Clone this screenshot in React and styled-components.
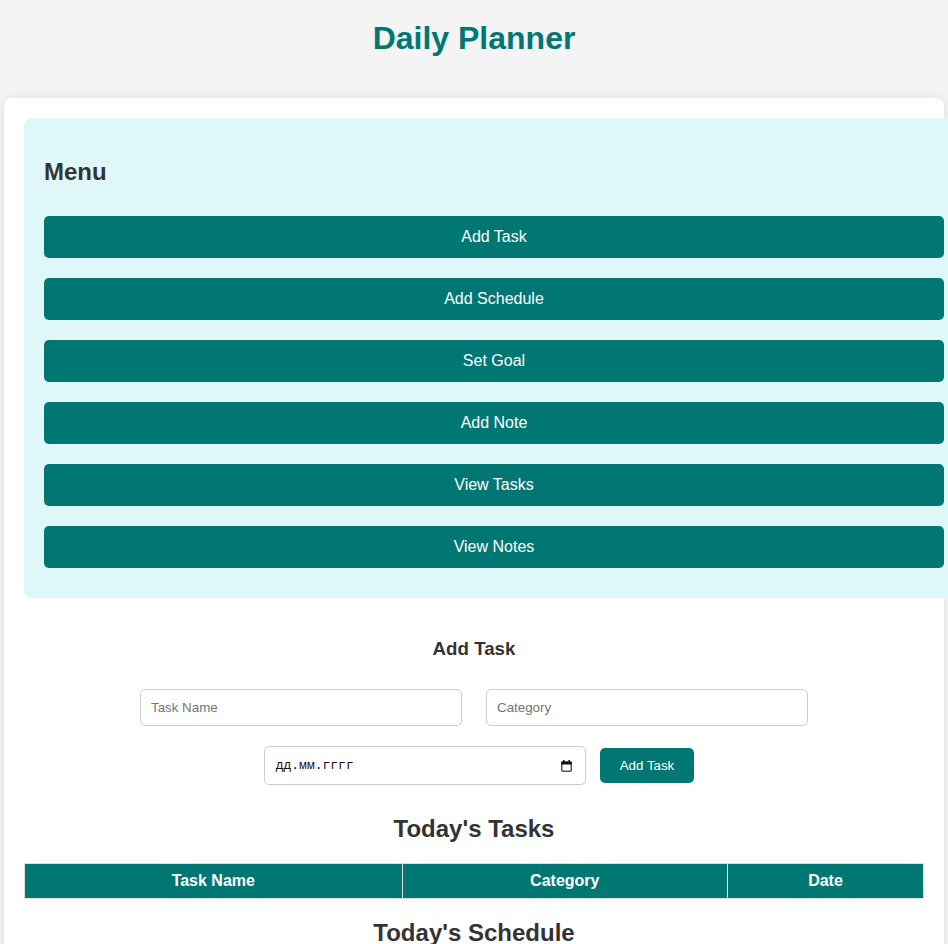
import React from "react";
import styled, { createGlobalStyle } from "styled-components";

const TEAL = "#007773";

const GlobalStyle = createGlobalStyle`
  body {
    margin: 0;
    background-color: #f4f4f4;
    font-family: "Liberation Sans", Arial, sans-serif;
    color: #333;
  }
`;

const Header = styled.header`
  padding-top: 20px;
  text-align: center;
`;

const Title = styled.h1`
  margin: 0;
  font-size: 32px;
  line-height: 37px;
  color: ${TEAL};
`;

const Card = styled.main`
  width: 900px;
  margin: 41px auto 0;
  padding: 20px;
  background-color: #fff;
  border-radius: 8px;
  box-shadow: 0 0 10px rgba(0, 0, 0, 0.1);
  display: flex;
  flex-direction: column;
`;

const Menu = styled.nav`
  box-sizing: content-box;
  width: 100%;
  padding: 20px;
  background-color: #e0f7fa;
  border-radius: 8px;
`;

const MenuTitle = styled.h2`
  margin: 20px 0;
  font-size: 24px;
  line-height: 27.6px;
  color: #333;
`;

const MenuList = styled.div`
  display: flex;
  flex-direction: column;
  gap: 20px;
  padding: 10px 0;
`;

const MenuButton = styled.button`
  width: 100%;
  padding: 12px;
  border: none;
  border-radius: 5px;
  background-color: ${TEAL};
  color: #fff;
  font-family: "Liberation Sans", Arial, sans-serif;
  font-size: 16px;
  line-height: 18px;
  cursor: pointer;
`;

const FormTitle = styled.h3`
  margin: 40px 0 0;
  font-size: 18.72px;
  line-height: 21.5px;
  text-align: center;
  color: #333;
`;

const Form = styled.form`
  display: flex;
  flex-direction: column;
  gap: 20px;
  margin-top: 30px;
`;

const FormRow = styled.div`
  display: flex;
  justify-content: center;
  align-items: center;
  gap: 4px;
`;

const TextInput = styled.input`
  box-sizing: border-box;
  width: 322px;
  height: 37px;
  margin: 0 10px;
  padding: 10px;
  border: 1px solid #ccc;
  border-radius: 5px;
  font-family: "Liberation Sans", Arial, sans-serif;
  font-size: 13.33px;
  outline: none;

  &::placeholder {
    color: #757575;
  }
`;

const DateField = styled.label`
  box-sizing: border-box;
  width: 322px;
  height: 39px;
  margin: 0 10px;
  padding: 0 13px 0 11px;
  border: 1px solid #ccc;
  border-radius: 5px;
  display: flex;
  align-items: center;
  justify-content: space-between;
  background-color: #fff;
`;

const DateText = styled.span`
  font-family: "Liberation Mono", "Courier New", monospace;
  font-size: 13px;
  color: #111;
`;

const SubmitButton = styled.button`
  padding: 10px 20px;
  border: none;
  border-radius: 5px;
  background-color: ${TEAL};
  color: #fff;
  font-family: "Liberation Sans", Arial, sans-serif;
  font-size: 13.33px;
  line-height: 15px;
  cursor: pointer;
`;

const SectionTitle = styled.h2`
  margin: ${(p) => p.$top}px 0 20px;
  font-size: 24px;
  line-height: 27.6px;
  text-align: center;
  color: #333;
`;

const Table = styled.table`
  width: 900px;
  border-collapse: collapse;
`;

const HeadCell = styled.th`
  width: ${(p) => p.$width};
  padding: 8px;
  border: 1px solid #ddd;
  background-color: ${TEAL};
  color: #fff;
  font-size: 16px;
  line-height: 18.4px;
`;

function CalendarIcon() {
  return (
    <svg width="11" height="12" viewBox="0 0 11 12">
      <rect x="0.75" y="2.25" width="9.5" height="9" rx="1" fill="none" stroke="#555" strokeWidth="1.5" />
      <rect x="0" y="1.5" width="11" height="3" rx="1" fill="#111" />
      <rect x="2" y="0" width="1.5" height="2" fill="#111" />
      <rect x="7.5" y="0" width="1.5" height="2" fill="#111" />
    </svg>
  );
}

const menuItems = ["Add Task", "Add Schedule", "Set Goal", "Add Note", "View Tasks", "View Notes"];

export default function App() {
  return (
    <>
      <GlobalStyle />
      <Header>
        <Title>Daily Planner</Title>
      </Header>
      <Card>
        <Menu>
          <MenuTitle>Menu</MenuTitle>
          <MenuList>
            {menuItems.map((item) => (
              <MenuButton key={item} type="button">
                {item}
              </MenuButton>
            ))}
          </MenuList>
        </Menu>

        <FormTitle>Add Task</FormTitle>
        <Form onSubmit={(e) => e.preventDefault()}>
          <FormRow>
            <TextInput type="text" placeholder="Task Name" />
            <TextInput type="text" placeholder="Category" />
          </FormRow>
          <FormRow>
            <DateField>
              <DateText>дд.мм.гггг</DateText>
              <CalendarIcon />
            </DateField>
            <SubmitButton type="submit">Add Task</SubmitButton>
          </FormRow>
        </Form>

        <SectionTitle $top={30}>Today's Tasks</SectionTitle>
        <Table>
          <thead>
            <tr>
              <HeadCell $width="42%">Task Name</HeadCell>
              <HeadCell $width="36.2%">Category</HeadCell>
              <HeadCell $width="21.8%">Date</HeadCell>
            </tr>
          </thead>
          <tbody></tbody>
        </Table>

        <SectionTitle $top={20}>Today's Schedule</SectionTitle>
      </Card>
    </>
  );
}
